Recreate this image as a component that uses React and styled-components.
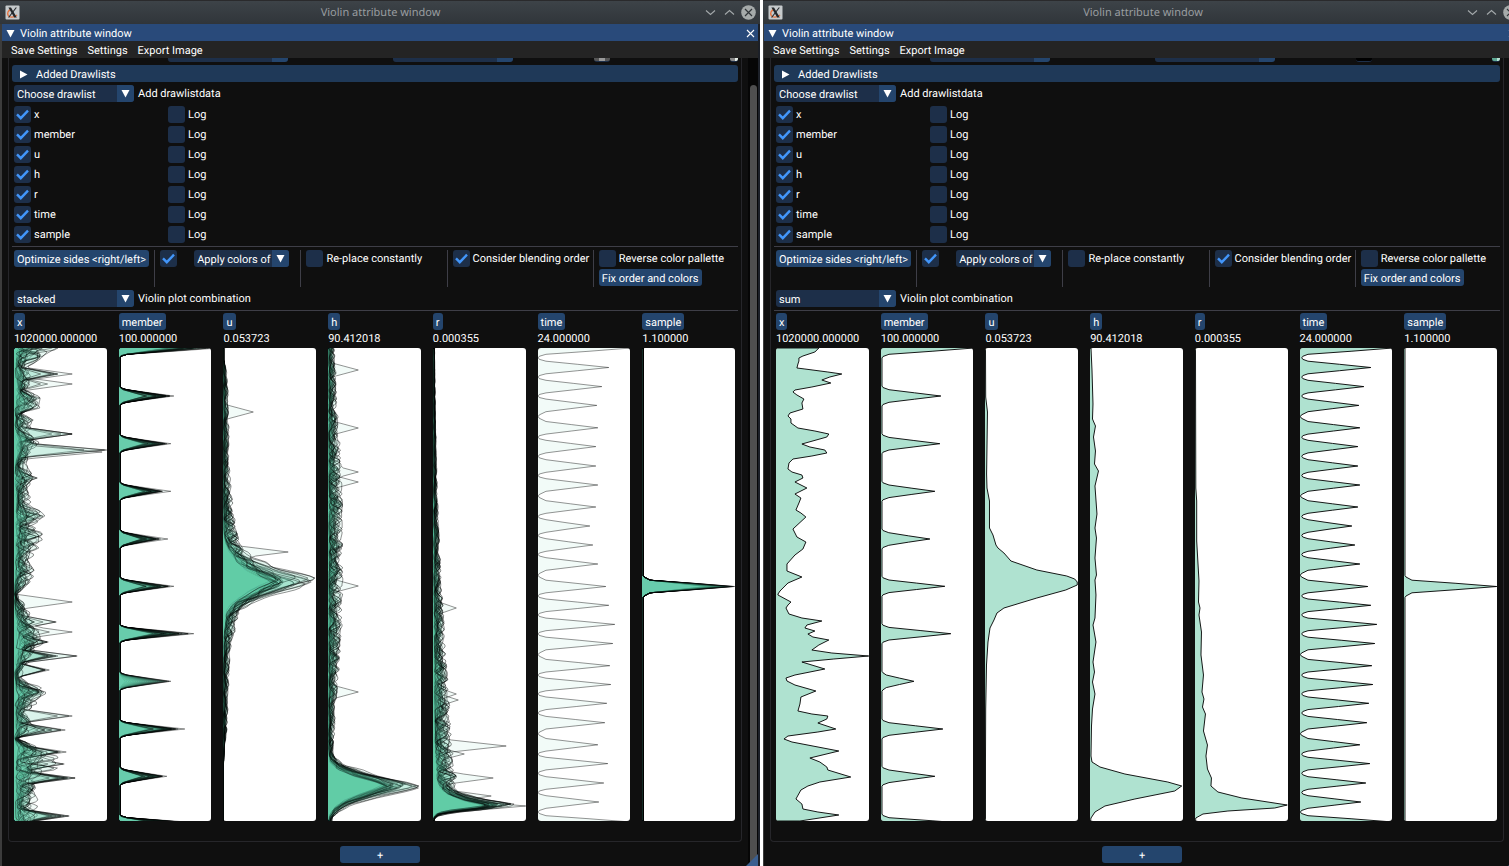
import React from "react";
import styled, { createGlobalStyle, css } from "styled-components";

const colors = {
  bg: "#0f0f0f",
  frame: "#1d2f49",
  button: "#24456d",
  header: "#1f3958",
  title: "#294a7a",
  menu: "#242424",
  line: "#3e3e47",
  border: "#26262a",
  check: "#4296fa",
};

const GlobalStyle = createGlobalStyle`
  *, *::before, *::after { box-sizing: border-box; }
  body {
    margin: 0;
    background: #fff;
    color: #fff;
    font: 11px/13px Roboto, "Liberation Sans", sans-serif;
    text-rendering: geometricPrecision;
    overflow-x: hidden;
  }
  button, select, input { font: inherit; color: inherit; margin: 0; text-rendering: inherit; }
`;

/* ---------- plot data ---------- */

const W = 93;
const H = 473;

function random(seed) {
  let a = seed;
  return () => {
    a = (a + 0x6d2b79f5) | 0;
    let t = Math.imul(a ^ (a >>> 15), 1 | a);
    t = (t + Math.imul(t ^ (t >>> 7), 61 | t)) ^ t;
    return ((t ^ (t >>> 14)) >>> 0) / 4294967296;
  };
}

function interpolate(points, y) {
  if (y <= points[0][0]) return points[0][1];
  for (let i = 1; i < points.length; i++) {
    const [y1, x1] = points[i];
    if (y <= y1) {
      const [y0, x0] = points[i - 1];
      return x0 + ((x1 - x0) * (y - y0)) / (y1 - y0 || 1);
    }
  }
  return points[points.length - 1][1];
}

const toPath = (points) =>
  `M-4 ${points[0][0].toFixed(1)}` +
  points.map(([y, x]) => `L${x.toFixed(1)} ${y.toFixed(1)}`).join("") +
  `L-4 ${points[points.length - 1][0].toFixed(1)}Z`;

/* A row of narrow peaks, each [y, height]. */
function comb(peaks, scale, half, floor = 1, wideFloor = 1) {
  const out = [];
  peaks.forEach(([y, full], i) => {
    const p = full * scale(i);
    const shoulder = Math.min(8, p * 0.16);
    const before = i ? (y - peaks[i - 1][0]) / 2 : half;
    const after = i < peaks.length - 1 ? (peaks[i + 1][0] - y) / 2 : half;
    const up = Math.min(half, before);
    const down = Math.min(half, after);
    const lowUp = before < 10 ? floor : wideFloor;
    const lowDown = after < 10 ? floor : wideFloor;
    out.push([y - up, lowUp], [y - up + 1.5, lowUp + 1], [y - 6.3, shoulder], [y - 3.2, p * 0.56], [y, p]);
    out.push([y + 3.2, p * 0.56], [y + 6.3, shoulder], [y + down - 1.5, lowDown + 1], [y + down, lowDown]);
  });
  return [[-20, wideFloor], ...out, [H + 20, wideFloor]];
}

/* A bundle of noisy curves that share one core profile. */
function bundle({ seed, count, core, noise, power = 1.5, cell = 7, spread = 0, scale, spikes = [] }) {
  const rnd = random(seed);
  const curves = Array.from({ length: count }, () => ({
    factor: scale(rnd()),
    shift: (rnd() - 0.5) * spread,
    phase: rnd() * cell,
    table: Array.from({ length: 100 }, () => Math.pow(rnd(), power)),
    spikes: [],
  }));
  spikes.forEach(([y, x, n = 1]) => {
    for (let k = 0; k < n; k++) {
      const c = curves[Math.floor(rnd() * count)];
      c.spikes.push([Math.round(y / 2) * 2, k === 0 ? x : x * (0.45 + 0.55 * rnd())]);
    }
  });
  return curves.map((c) => {
    const pts = [];
    for (let y = -2; y <= H + 3; y += 2) {
      const t = (y + 4 + c.phase) / cell;
      const i = Math.floor(t);
      const f = (1 - Math.cos((t - i) * Math.PI)) / 2;
      const n = c.table[i] * (1 - f) + c.table[i + 1] * f;
      let x = interpolate(core, y + c.shift) * c.factor + interpolate(noise, y) * n;
      c.spikes.forEach(([sy, sx]) => {
        const d = Math.abs(y - sy) / 8;
        if (d < 1) x = Math.max(x, sx * (1 - d));
      });
      pts.push([y, Math.min(W, x + 0.4)]);
    }
    return toPath(pts);
  });
}

const sumX = [
  [0, 43], [4, 39], [8, 27], [10, 23], [13, 23], [16, 22], [20, 21], [21, 29], [24, 52], [26, 66], [29, 54], [32, 46], [35, 55],
  [39, 36], [42, 19], [44, 17], [47, 21], [51, 28], [55, 26], [61, 27], [65, 14], [68, 12], [71, 15], [75, 15], [80, 22], [83, 39],
  [86, 53], [89, 51], [96, 26], [99, 34], [102, 49], [105, 51], [108, 36], [111, 17], [115, 13], [121, 12], [124, 16], [127, 26],
  [130, 27], [134, 19], [140, 31], [146, 19], [150, 25], [155, 23], [162, 20], [165, 25], [169, 30], [181, 17], [189, 21], [194, 30],
  [201, 27], [207, 19], [216, 11], [223, 11], [229, 26], [235, 12], [243, 4], [246, 2], [247, 2], [254, 15], [257, 12], [260, 10],
  [266, 13], [270, 26], [273, 46], [277, 31], [280, 29], [283, 39], [286, 32], [289, 37], [292, 53], [297, 43], [302, 36], [305, 56],
  [308, 93], [311, 58], [314, 26], [321, 49], [327, 19], [330, 10], [333, 11], [337, 19], [343, 40], [349, 25], [356, 24], [363, 22],
  [366, 36], [368, 52], [371, 51], [375, 42], [381, 60], [384, 42], [388, 12], [391, 8], [394, 16], [403, 63], [410, 34], [414, 44],
  [419, 51], [422, 52], [429, 75], [434, 44], [438, 32], [442, 25], [451, 20], [456, 26], [461, 27], [464, 42], [467, 63], [473, 24],
];

const sumU = [
  [0, 0.5], [49, 0.7], [64, 2.5], [126, 1.6], [140, 2], [153, 4.5], [180, 4.5], [187, 8], [197, 11], [200, 13], [205, 19], [213, 26],
  [222, 52], [228, 82], [231, 90], [234, 92.5], [237, 92.5], [242, 81], [250, 52], [260, 19], [265, 12], [272, 9], [280, 5], [294, 3],
  [317, 1.5], [361, 0.7], [411, 0.5], [473, 0.5],
];

const coreU = [
  [0, 0.3], [175, 0.5], [188, 2], [198, 7], [206, 14], [213, 25], [219, 40], [225, 62], [229, 80], [233, 92], [237, 80], [242, 60],
  [248, 42], [254, 25], [260, 13], [266, 6], [275, 3], [290, 1], [330, 0.3], [473, 0],
];

const sumH = [
  [0, 1], [22, 2], [56, 3], [71, 2.5], [78, 5.5], [89, 3.5], [103, 5.5], [116, 4.5], [123, 8.5], [138, 5], [166, 7], [180, 5],
  [190, 6.5], [210, 5], [227, 6.5], [232, 5], [247, 6], [270, 5], [277, 3], [294, 6], [314, 3], [324, 4.5], [334, 2.5], [346, 5],
  [361, 2.5], [378, 1.5], [408, 1], [414, 2], [419, 10], [426, 35], [434, 78], [438, 92], [443, 85], [451, 45], [458, 15], [464, 5],
  [470, 1], [473, 0.5],
];

const coreH = [
  [0, 0.5], [200, 1], [400, 0.5], [412, 2], [419, 12], [426, 38], [433, 74], [438, 92], [442, 76], [448, 48], [455, 22], [462, 8], [468, 2], [473, 0.5],
];

const sumR = [
  [0, 0.5], [140, 0.8], [153, 1.7], [193, 1.7], [233, 4], [254, 3.5], [260, 5], [267, 4], [284, 6.5], [307, 6], [327, 8.5],
  [344, 7], [351, 9], [359, 7.5], [366, 10.5], [383, 8.5], [397, 12.5], [408, 11], [421, 12.5], [430, 16.5], [438, 16], [444, 23],
  [450, 47], [457, 92.5], [460, 80], [463, 33], [466, 8], [470, 0.8], [473, 0.5],
];

const coreR = [
  [0, 0.3], [200, 0.6], [300, 1.5], [400, 3], [430, 6], [440, 11], [446, 24], [452, 52], [457, 92], [460, 74], [463, 32], [466, 8], [470, 0.8], [473, 0.5],
];

const memberY = [0, 48, 95.7, 143.3, 191, 238.3, 285.7, 333.3, 381, 428.3, 476];
const withHeights = (ys, xs) => ys.map((y, i) => [y, xs[i]]);
const memberSum = withHeights(memberY, [93, 60, 59, 54, 49, 64, 70, 33, 62, 54, 93]);
const memberMax = withHeights(memberY, [100, 55, 52, 52, 49, 55, 75, 52, 66, 48, 93]);

const timePeaks = withHeights(
  [0, 19.5, 38.6, 57.4, 79.8, 98.6, 118, 137, 159, 178, 197, 216, 238.5, 257.3, 276.4, 295.5, 317.7, 336.5, 355.3, 374.7, 396.8, 415.6, 435, 454, 474],
  [93, 71, 64, 59, 60, 58, 58, 60, 58, 52, 55, 60, 68, 71, 77, 75, 72, 73, 69, 67, 60, 70, 66, 61, 93]
);

const one = () => 1;
const sumPlots = {
  x: [toPath(sumX)],
  member: [toPath(comb(memberSum, one, 10))],
  u: [toPath(sumU)],
  h: [toPath(sumH)],
  r: [toPath(sumR)],
  time: [toPath(comb(timePeaks, one, 11, 1.8, 0.5))],
  sample: [toPath(comb([[238.5, 93]], one, 11))],
};

const memberRandom = random(11);
const stackedPlots = {
  x: bundle({
    seed: 5,
    count: 30,
    cell: 8,
    core: [[0, 5], [16, 3], [40, 5], [60, 2], [80, 2], [100, 6], [120, 2], [160, 3], [200, 4], [230, 2], [246, 0], [262, 1], [300, 8], [325, 1], [345, 5], [365, 2], [385, 4], [391, 1], [400, 8], [420, 3], [450, 4], [473, 7]],
    noise: [[0, 44], [12, 24], [20, 10], [30, 16], [42, 8], [50, 32], [60, 26], [66, 10], [72, 18], [82, 14], [95, 24], [108, 12], [116, 10], [130, 25], [137, 14], [152, 14], [168, 29], [176, 18], [188, 26], [200, 28], [212, 14], [222, 20], [236, 14], [246, 3], [262, 16], [275, 16], [290, 26], [305, 16], [330, 8], [343, 28], [356, 22], [365, 10], [380, 20], [391, 2], [404, 38], [420, 42], [432, 16], [442, 22], [456, 24], [473, 14]],
    power: 2.4,
    scale: (r) => 0.2 + 1.2 * r,
    spikes: [[26, 58, 6], [36, 58, 5], [86, 58, 5], [102, 93, 3], [104, 88], [129, 23, 4], [254, 58], [273, 42, 5], [283, 58, 2], [293, 34, 5], [308, 63, 10], [321, 35, 7], [343, 28, 4], [368, 58, 3], [381, 51, 8], [403, 52, 8], [416, 50, 4], [429, 61, 10], [467, 55, 9]],
  }),
  member: Array.from({ length: 26 }, (_, n) =>
    toPath(comb(memberMax, (i) => (i === 7 ? 0.12 + 0.88 * (n / 25) : n === 0 ? 1 : 0.45 + 0.48 * memberRandom()), 9 + memberRandom()))
  ),
  u: bundle({
    seed: 21,
    count: 32,
    core: coreU,
    noise: [[12, 0], [22, 3], [50, 5], [120, 6], [160, 10], [190, 14], [215, 16], [232, 10], [255, 12], [275, 12], [300, 7], [330, 6], [380, 4], [400, 1], [415, 0]],
    power: 2.8,
    spread: 8,
    scale: (r) => 0.55 + 0.42 * r * r * r,
    spikes: [[64, 30], [203, 65]],
  }),
  h: bundle({
    seed: 34,
    count: 32,
    core: coreH,
    noise: [[0, 6], [60, 9], [140, 14], [230, 14], [300, 13], [360, 7], [405, 5], [420, 10], [450, 8], [470, 4]],
    power: 2.6,
    spread: 5,
    scale: (r) => 0.6 + 0.4 * r * r,
    spikes: [[22, 30], [80, 30], [124, 30], [134, 30], [238, 30], [343, 30]],
  }),
  r: bundle({
    seed: 55,
    count: 32,
    core: coreR,
    noise: [[0, 1], [80, 2], [150, 4], [220, 7], [290, 11], [330, 14], [400, 17], [430, 20], [445, 12], [462, 0]],
    power: 2.4,
    spread: 3,
    scale: (r) => 0.6 + 0.4 * r * r * r,
    spikes: [[260, 23], [346, 23], [352, 25], [397, 73], [406, 31], [430, 60], [428, 23], [448, 58], [458, 93]],
  }),
  time: [toPath(comb(timePeaks, one, 11, 0.3, 0.3))],
  sample: Array.from({ length: 26 }, (_, n) => toPath(comb([[238.5, 93]], () => 0.68 + 0.32 * (n / 25), 11))),
};

const attributes = [
  { name: "x", max: "1020000.000000" },
  { name: "member", max: "100.000000" },
  { name: "u", max: "0.053723" },
  { name: "h", max: "90.412018" },
  { name: "r", max: "0.000355" },
  { name: "time", max: "24.000000" },
  { name: "sample", max: "1.100000" },
];

/* ---------- styled parts ---------- */

const Desktop = styled.main`
  display: grid;
  grid-template-columns: 760fr 759fr;
  column-gap: 3px;
  width: calc(100% + 13px);
  min-height: 100vh;
`;

const WindowFrame = styled.section`
  display: flex;
  flex-direction: column;
  min-width: 0;
  background: ${colors.bg};
`;

const TitleBar = styled.header`
  display: grid;
  grid-template-columns: 1fr auto 1fr;
  align-items: center;
  height: 24px;
  padding: 0 4px 0 5px;
  border-top: 1px solid #2a2a2c;
  background: linear-gradient(#3d4348, #30353a);
  color: #999da0;
  font: 11px/16px "Noto Sans", sans-serif;
`;

const TitleText = styled.h1`
  margin: 0;
  font: inherit;
`;

const TitleButtons = styled.div`
  display: flex;
  justify-content: flex-end;
  gap: 4px;
`;

const PlainButton = styled.button`
  display: flex;
  align-items: center;
  padding: 0;
  border: 0;
  background: none;
`;

const Client = styled.div`
  position: relative;
  flex: 1;
  display: flex;
  flex-direction: column;
  border: solid #3c3c3c;
  border-width: 0 2px 0 ${(p) => (p.$clipped ? 1 : 2)}px;
  border-right-color: #1c2028;
`;

const InnerTitle = styled.div`
  display: flex;
  align-items: center;
  gap: 5px;
  height: 17px;
  padding: 1px 3px 0 4px;
  background: ${colors.title};
`;

const InnerTitleText = styled.h2`
  flex: 1;
  margin: 0;
  font: inherit;
`;

const MenuBar = styled.nav`
  display: flex;
  gap: 10px;
  height: 17px;
  padding: 1px 9px 0;
  background: ${colors.menu};
`;

const Scroller = styled.div`
  flex: 1;
  display: grid;
  grid-template-columns: 1fr 10px;
`;

const Content = styled.div`
  display: flex;
  flex-direction: column;
  gap: 4px;
  min-width: 0;
  padding: 0 6px 3px;
`;

const ScrollTrack = styled.div`
  padding: 27px 1px 0 2px;
  background: #060606;
`;

const ScrollThumb = styled.div`
  height: 100%;
  border-radius: 4px 4px 0 0;
  background: #4f4f4f;
`;

const ResizeGrip = styled.div`
  position: absolute;
  right: 0;
  bottom: 0;
  width: 12px;
  height: 12px;
  background: #3a5f90;
  clip-path: polygon(100% 0, 100% 100%, 0 100%);
`;

const Panel = styled.div`
  flex: 1;
  display: flex;
  flex-direction: column;
  gap: 3px;
  padding: 0 3px 20px;
  border: 1px solid ${colors.border};
  border-top: 0;
  border-radius: 0 0 4px 4px;
`;

/* Centred on the window, scrollbar included. */
const AddRow = styled.div`
  display: flex;
  justify-content: center;
  padding-left: 10px;
`;

const ScrolledRow = styled.div`
  display: grid;
  grid-template-columns: 156px 225px 201px 136px 1fr;
  height: 4px;
`;

const ScrolledCombo = styled.div`
  width: 120px;
  border-radius: 0 0 3px 3px;
  background: linear-gradient(to right, ${colors.frame} 104px, ${colors.button} 104px);
`;

const ScrolledSwatch = styled.div`
  width: ${(p) => p.$width}px;
  border: solid ${colors.frame};
  border-width: 0 0 1px;
  border-radius: 0 0 3px 3px;
  background: ${(p) => p.$fill};
`;

const CollapsingHeader = styled.button`
  display: flex;
  align-items: center;
  gap: 8px;
  height: 17px;
  padding: 1px 7px 0;
  border: 0;
  border-radius: 3px;
  background: ${colors.header};
`;

const Row = styled.div`
  display: flex;
  align-items: center;
  gap: ${(p) => p.$gap || 4}px;
  height: 17px;
  padding-left: ${(p) => (p.$flush ? 0 : 2)}px;
`;

const AttributeGrid = styled.div`
  display: grid;
  grid-template-columns: 154px 1fr;
  row-gap: 3px;
  padding: 1px 0 0 2px;
`;

const CheckLabel = styled.label`
  display: flex;
  align-items: center;
  gap: 3px;
  height: 17px;
  white-space: nowrap;
`;

const CheckFrame = styled.span`
  display: grid;
  width: 17px;
  height: 17px;
  > * { grid-area: 1 / 1; }
  svg { display: none; pointer-events: none; }
  input:checked + svg { display: block; }
`;

const CheckInput = styled.input`
  appearance: none;
  width: 17px;
  height: 17px;
  border-radius: 3px;
  background: ${colors.frame};
`;

const ComboFrame = styled.span`
  position: relative;
  display: flex;
  width: ${(p) => p.$width}px;
  height: 17px;
  border-radius: 3px;
  overflow: hidden;
`;

const ComboSelect = styled.select`
  appearance: none;
  width: 100%;
  height: 17px;
  padding: 1px 3px 0;
  border: 0;
  background: ${colors.frame};
`;

const ComboArrow = styled.span`
  position: absolute;
  inset: 0 0 0 auto;
  display: grid;
  place-items: center;
  width: 17px;
  background: ${colors.button};
  pointer-events: none;
`;

const buttonLook = css`
  height: 17px;
  padding: 1px 3px 0;
  border: 0;
  border-radius: 3px;
  background: ${colors.button};
  white-space: nowrap;
`;

const Button = styled.button`
  ${buttonLook}
  min-width: ${(p) => p.$minWidth || 0}px;
`;

const Separator = styled.hr`
  height: 1px;
  margin: 0;
  border: 0;
  background: ${colors.line};
  flex: none;
`;

const OptionColumns = styled.div`
  display: grid;
  grid-template-columns: repeat(5, 1fr);
  margin: 0 -1px 0 -4px;
`;

const OptionColumn = styled.div`
  display: flex;
  flex-direction: column;
  align-items: flex-start;
  gap: 2px;
  min-width: 0;
  height: 37px;
  padding-left: 5px;
  border-left: 1px solid ${colors.line};
  &:first-child { border-color: transparent; }
`;

const PlotGrid = styled.div`
  display: grid;
  grid-template-columns: repeat(7, 1fr);
  column-gap: 12px;
  margin-top: -1px;
  padding: 0 3px 0 2px;
`;

const PlotColumn = styled.figure`
  display: flex;
  flex-direction: column;
  align-items: flex-start;
  gap: 3px;
  min-width: 0;
  margin: 0;
`;

const PlotMax = styled.figcaption`
  line-height: 12px;
`;

const PlotCanvas = styled.svg`
  display: block;
  width: 100%;
  height: 473px;
  border-radius: 3px;
  background: #fff;
`;

const PlotCurve = styled.path`
  fill: #5fc6a1;
  fill-opacity: ${(p) => (p.$solid ? 0.5 : 0.08)};
  stroke: #000;
  stroke-opacity: ${(p) => (p.$solid ? 0.9 : 0.42)};
  stroke-width: 1;
  vector-effect: non-scaling-stroke;
`;

/* ---------- components ---------- */

const Triangle = ({ right }) => (
  <svg width="9" height="9" viewBox="0 0 9 9" aria-hidden="true">
    <path d={right ? "M1 0.5 8.5 4.5 1 8.5Z" : "M0.5 1H8.5L4.5 8.5Z"} fill="#fff" />
  </svg>
);

function Check({ label, checked, hiddenLabel }) {
  return (
    <CheckLabel>
      <CheckFrame>
        <CheckInput type="checkbox" defaultChecked={checked} aria-label={hiddenLabel} />
        <svg width="17" height="17" viewBox="0 0 17 17" fill="none" stroke={colors.check} strokeWidth="2.4">
          <path d="M3 8.3 6.8 12.2 14 4.7" />
        </svg>
      </CheckFrame>
      {label}
    </CheckLabel>
  );
}

function Combo({ id, options, width, label }) {
  return (
    <ComboFrame $width={width}>
      <ComboSelect id={id} aria-label={label}>
        {options.map((o) => (
          <option key={o}>{o}</option>
        ))}
      </ComboSelect>
      <ComboArrow>
        <Triangle />
      </ComboArrow>
    </ComboFrame>
  );
}

const XLogo = () => (
  <svg width="15" height="15" viewBox="0 0 15 15" aria-hidden="true">
    <rect x="0.5" y="0.5" width="14" height="14" rx="1" fill="#c6cacc" />
    <path d="M6.5 4.5C3 5 2 8 3.2 10.5S9 12.6 12 10" fill="none" stroke="#e8713c" strokeWidth="1.3" />
    <path d="M3.4 2.5H6L11.8 12.5H9.2Z" fill="#23272b" />
    <path d="M11.3 2.5 3.6 12.5" stroke="#23272b" strokeWidth="1.1" />
  </svg>
);

const Glyph = ({ d }) => (
  <svg width="15" height="15" viewBox="0 0 15 15" fill="none" stroke="#a3a8aa" strokeWidth="1.1" aria-hidden="true">
    <path d={d} />
  </svg>
);

function ViolinWindow({ id, clipped, combination, plots, solid, swatches }) {
  return (
    <WindowFrame>
      <TitleBar>
        <XLogo />
        <TitleText>Violin attribute window</TitleText>
        <TitleButtons>
          <PlainButton aria-label="Minimize"><Glyph d="M3 5.5 7.5 9.5 12 5.5" /></PlainButton>
          <PlainButton aria-label="Maximize"><Glyph d="M3 9.5 7.5 5.5 12 9.5" /></PlainButton>
          <PlainButton aria-label="Close">
            <svg width="15" height="15" viewBox="0 0 15 15" aria-hidden="true">
              <circle cx="7.5" cy="7.5" r="7.3" fill="#a5aaaa" />
              <path d="M4 4 11 11M11 4 4 11" stroke="#2f3438" strokeWidth="1.2" />
            </svg>
          </PlainButton>
        </TitleButtons>
      </TitleBar>
      <Client $clipped={clipped}>
        <InnerTitle>
          <PlainButton aria-label="Collapse"><Triangle /></PlainButton>
          <InnerTitleText>Violin attribute window</InnerTitleText>
          <PlainButton aria-label="Close panel">
            <svg width="9" height="9" viewBox="0 0 9 9" stroke="#fff" strokeWidth="1.1" aria-hidden="true">
              <path d="M1 1 8 8M8 1 1 8" />
            </svg>
          </PlainButton>
        </InnerTitle>
        <MenuBar>
          <PlainButton>Save Settings</PlainButton>
          <PlainButton>Settings</PlainButton>
          <PlainButton>Export Image</PlainButton>
        </MenuBar>
        <Scroller>
          <Content>
            <Panel>
              <ScrolledRow>
                <span />
                <ScrolledCombo />
                <ScrolledCombo />
                <ScrolledSwatch $width={16} $fill={swatches[0]} />
                <ScrolledSwatch $width={8} $fill={swatches[1]} />
              </ScrolledRow>
              <CollapsingHeader>
                <Triangle right />
                Added Drawlists
              </CollapsingHeader>
              <Row>
                <Combo id={`${id}-drawlist`} width={120} options={["Choose drawlist"]} />
                <label htmlFor={`${id}-drawlist`}>Add drawlistdata</label>
              </Row>
              <AttributeGrid>
                {attributes.map((a) => (
                  <React.Fragment key={a.name}>
                    <Check label={a.name} checked />
                    <Check label="Log" />
                  </React.Fragment>
                ))}
              </AttributeGrid>
              <Separator />
              <OptionColumns>
                <OptionColumn>
                  <Button>Optimize sides &lt;right/left&gt;</Button>
                </OptionColumn>
                <OptionColumn>
                  <Row $flush $gap={17}>
                    <Check checked hiddenLabel="Apply colors" />
                    <Combo width={95} label="Color source" options={["Apply colors of Drawlists"]} />
                  </Row>
                </OptionColumn>
                <OptionColumn>
                  <Check label="Re-place constantly" />
                </OptionColumn>
                <OptionColumn>
                  <Check label="Consider blending order" checked />
                </OptionColumn>
                <OptionColumn>
                  <Check label="Reverse color pallette" />
                  <Button>Fix order and colors</Button>
                </OptionColumn>
              </OptionColumns>
              <Row>
                <Combo id={`${id}-combination`} width={120} options={[combination]} />
                <label htmlFor={`${id}-combination`}>Violin plot combination</label>
              </Row>
              <Separator />
              <PlotGrid>
                {attributes.map((a) => (
                  <PlotColumn key={a.name}>
                    <Button>{a.name}</Button>
                    <PlotMax>{a.max}</PlotMax>
                    <PlotCanvas viewBox={`0 0 ${W} ${H}`} preserveAspectRatio="none" role="img" aria-label={a.name}>
                      {plots[a.name].map((d, i) => (
                        <PlotCurve key={i} d={d} $solid={solid} />
                      ))}
                    </PlotCanvas>
                  </PlotColumn>
                ))}
              </PlotGrid>
            </Panel>
            <AddRow>
              <Button $minWidth={80}>+</Button>
            </AddRow>
          </Content>
          <ScrollTrack>
            <ScrollThumb />
          </ScrollTrack>
        </Scroller>
        <ResizeGrip />
      </Client>
    </WindowFrame>
  );
}

export default function App() {
  return (
    <>
      <GlobalStyle />
      <Desktop>
        <ViolinWindow
          id="left"
          combination="stacked"
          plots={stackedPlots}
          swatches={["linear-gradient(to right, #555 5px, #999 5px 11px, #555 11px)", "linear-gradient(to right, #888 5px, #e8efe8 5px)"]}
        />
        <ViolinWindow
          id="right"
          clipped
          solid
          combination="sum"
          plots={sumPlots}
          swatches={["#000", "linear-gradient(to right, #5fa893 5px, #b9e5d6 5px)"]}
        />
      </Desktop>
    </>
  );
}
